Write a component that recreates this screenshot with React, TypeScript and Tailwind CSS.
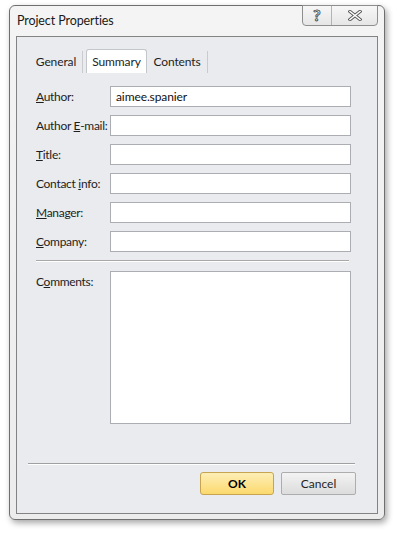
import React from 'react';

const font = "font-['Lato','Open_Sans',sans-serif]";

const Field: React.FC<{ label: React.ReactNode; value?: string }> = ({ label, value }) => (
  <div className="flex items-center h-[21px]">
    <label className="w-[74px] whitespace-nowrap text-[12px] tracking-[-0.3px] text-[#1e1e1e] leading-none">{label}</label>
    <div className="w-[241px] h-[21px] bg-white border border-[#abadb3] px-[5px] flex items-center text-[12px] tracking-[-0.1px] text-[#111]">
      {value}
    </div>
  </div>
);

const App: React.FC = () => {
  return (
    <div className={`w-[393px] h-[536px] bg-white ${font} pt-[5px] pl-[9px]`}>
      <div className="relative w-[376px] h-[515px] rounded-[6px] border border-[#6f6f6f] bg-gradient-to-b from-[#f4f4f4] to-[#ececec] shadow-[2px_3px_6px_rgba(0,0,0,0.35)] flex flex-col px-[6px] pb-[5px]">
        {/* title bar */}
        <div className="h-[30px] flex items-center pl-[1px] text-[12.5px] tracking-[-0.1px] text-[#1a1a1a]">Project Properties</div>

        <div className="absolute top-[-1px] right-[6px] flex h-[21px] border border-[#8e8e8e] rounded-b-[4px] bg-gradient-to-b from-[#f7f7f7] to-[#e6e6e6] overflow-hidden">
          <div className="w-[29px] flex items-center justify-center border-r border-[#b4b4b4] text-[16px] font-bold text-white [-webkit-text-stroke:0.9px_#4a4a4a] leading-none pb-[2px]">?</div>
          <div className="w-[45px] flex items-center justify-center">
            <svg width="14" height="11" viewBox="0 0 14 11">
              <path d="M2 1.5 L12 9.5 M12 1.5 L2 9.5" stroke="#5a5a5a" strokeWidth="3.4" strokeLinecap="square" />
              <path d="M2 1.5 L12 9.5 M12 1.5 L2 9.5" stroke="#ffffff" strokeWidth="1.6" strokeLinecap="square" />
            </svg>
          </div>
        </div>

        {/* client area */}
        <div className="flex-1 border border-[#838383] bg-[#e9ebee] flex flex-col">
          {/* tabs */}
          <div className="flex items-end h-[24px] mt-[12px] ml-[13px] text-[12px] tracking-[-0.1px] text-[#1e1e1e]">
            <div className="h-[22px] w-[53px] flex items-center justify-center border-r border-[#c9cbce]">General</div>
            <div className="h-[24px] w-[61px] ml-[3px] flex items-center justify-center bg-white border border-b-0 border-[#c3c6ca] rounded-t-[3px]">Summary</div>
            <div className="h-[22px] w-[61px] flex items-center justify-center border-r border-[#c9cbce]">Contents</div>
          </div>

          <div className="flex flex-col gap-[8px] mt-[13px] pl-[19px]">
            <Field label={<><span className="underline">A</span>uthor:</>} value="aimee.spanier" />
            <Field label={<>Author <span className="underline">E</span>-mail:</>} />
            <Field label={<><span className="underline">T</span>itle:</>} />
            <Field label={<>Contact <span className="underline">i</span>nfo:</>} />
            <Field label={<><span className="underline">M</span>anager:</>} />
            <Field label={<><span className="underline">C</span>ompany:</>} />
          </div>

          <div className="ml-[19px] w-[313px] mt-[8px] border-t border-[#a8a8a8] border-b border-b-white" />

          <div className="flex mt-[9px] pl-[19px]">
            <label className="w-[74px] text-[12px] tracking-[-0.3px] text-[#1e1e1e] pt-[2px]">C<span className="underline">o</span>mments:</label>
            <div className="w-[241px] h-[153px] bg-white border border-[#abadb3]" />
          </div>

          <div className="ml-[11px] w-[327px] mt-[39px] border-t border-[#a0a0a0] border-b border-b-white" />

          <div className="flex justify-end gap-[7px] mt-[7px] pr-[21px]">
            <button className="w-[74px] h-[23px] rounded-[3px] border border-[#c6a451] bg-gradient-to-b from-[#fdeeb4] to-[#fcd96d] text-[12px] font-bold text-black">OK</button>
            <button className="w-[75px] h-[23px] rounded-[2px] border border-[#adadad] bg-gradient-to-b from-[#f3f3f3] to-[#dcdcdc] text-[12px] text-[#1e1e1e]">Cancel</button>
          </div>
        </div>
      </div>
    </div>
  );
};

export default App;
